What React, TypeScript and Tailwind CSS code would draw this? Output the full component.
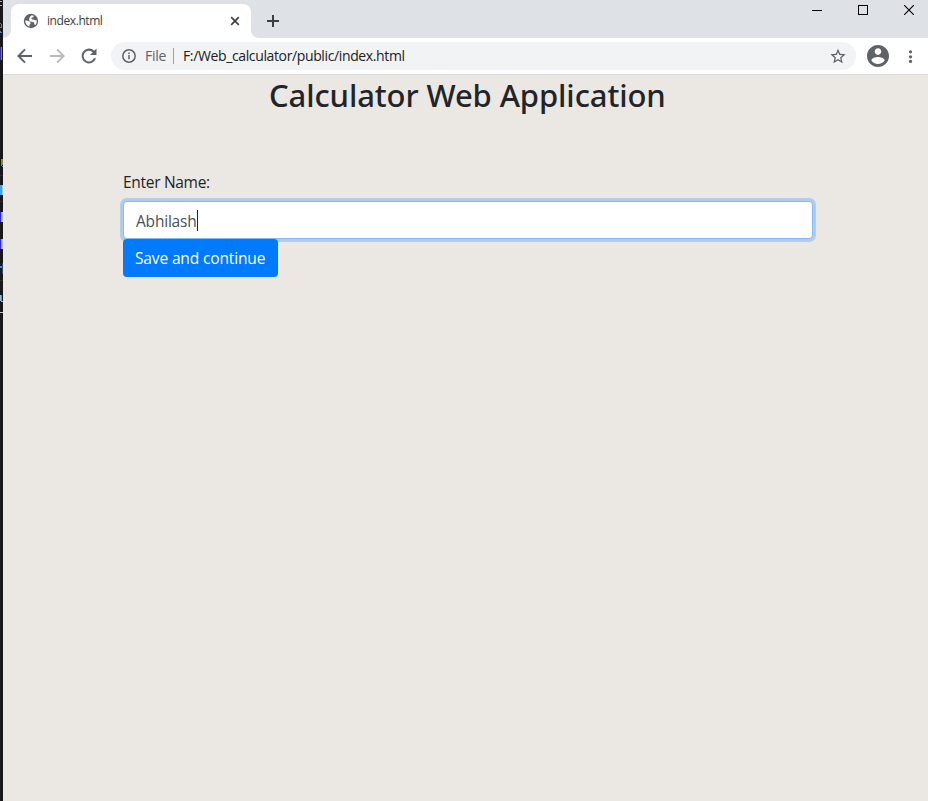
import React from "react";

function EditorSliver() {
  return (
    <svg width="3" height="801" viewBox="0 0 3 801" shapeRendering="crispEdges" className="block shrink-0 bg-[#18181a]">
      <path d="M0 1h2v1H0zM0 5h2v1H0z" fill="#a9a9a9" />
      <path d="M0 23h1v1H0zM1 24h1v3H1zM0 27h2v1H0zM0 31h1v2H0zM1 32h1v1H1z" fill="#3f86c8" />
      <path d="M0 47h1v13H0z" fill="#30308f" />
      <path d="M1 47h1v13H1z" fill="#5e83d8" />
      <path d="M1 159h1v7H1zM2 159h1v1H2zM2 166h1v1H2z" fill="#3991d8" />
      <path d="M2 160h1v5H2z" fill="#8a8340" />
      <path d="M0 185h2v10H0z" fill="#48a0e8" />
      <path d="M2 185h1v10H2z" fill="#8ecbe4" />
      <path d="M0 212h1v10H0zM0 239h1v10H0z" fill="#3326cb" />
      <path d="M1 212h1v10H1zM1 239h1v10H1z" fill="#6ba7c8" />
      <path d="M2 212h1v10H2zM2 239h1v10H2z" fill="#a9c7da" />
      <path d="M0 266h2v2H0z" fill="#5389b7" />
      <path d="M2 263h1v11H2z" fill="#254a78" />
      <path d="M0 295h1v6H0zM1 301h2v1H1z" fill="#86b8dd" />
      <path d="M1 295h1v6H1z" fill="#b88532" />
      <path d="M0 312h3v1H0z" fill="#c5c5c5" />
      <path d="M0 175h3v1H0zM0 201h3v1H0zM0 280h3v1H0z" fill="#2b2b2c" />
    </svg>
  );
}

function TabStrip() {
  return (
    <div className="flex h-[38px] items-start bg-[#dee1e6]">
      <svg width="8" height="8" viewBox="0 0 8 8" className="mt-[30px] shrink-0">
        <path d="M0 8H8V0A8 8 0 0 1 0 8Z" fill="#fff" />
      </svg>
      <div className="mt-1 flex h-[34px] w-60 shrink-0 items-center rounded-t-lg bg-white pl-3 pr-[11px]">
        <svg width="16" height="16" viewBox="0 0 16 16" className="shrink-0">
          <circle cx="8" cy="8" r="7.2" fill="#5f6368" />
          <path
            d="M8.8 2.2 10.800 2.700C10.700 4 9.800 4.500 8.600 4.700c-.5.900 0 1.600 1.200 1.700 1.600 0 2.400.8 3.900.8.300 2-.3 3.700-1.400 4.900-1-.2-.9-1.200-1.200-2-.400-1.200-1.600-1.300-2.800-1.300-1.600 0-2.200-1-2.200-2.200C6.100 4.600 7.300 3.200 8.800 2.200ZM2.200 7.600c1.800 0 3.300.2 4.300 1 .9.700 1.300 1.500 1 2.500-.900.100-1.100.600-1.100 1.400v1.200C4 12.800 2.300 10.700 2.200 7.600Z"
            fill="#fff"
          />
        </svg>
        <span className="ml-2 grow whitespace-nowrap text-[12px] leading-4 tracking-[-0.42px] text-[#3c4043]">index.html</span>
        <svg width="10" height="10" viewBox="0 0 10 10" stroke="#3c4043" strokeWidth="1.7" className="shrink-0">
          <path d="M1.2 1.2l7.6 7.6M8.8 1.2L1.2 8.8" />
        </svg>
      </div>
      <svg width="8" height="8" viewBox="0 0 8 8" className="mt-[30px] shrink-0">
        <path d="M0 8H8A8 8 0 0 1 0 0Z" fill="#fff" />
      </svg>
      <svg width="12" height="12" viewBox="0 0 12 12" fill="#3c4043" className="ml-2 mt-[15px] shrink-0">
        <path d="M5 0h2v5h5v2H7v5H5V7H0V5h5z" />
      </svg>
      <div className="ml-auto flex shrink-0 gap-9 pr-[14px] pt-[5px] text-black">
        <svg width="10" height="10" viewBox="0 0 10 10" shapeRendering="crispEdges">
          <path d="M0 5h10v1H0z" />
        </svg>
        <svg width="10" height="10" viewBox="0 0 10 10" shapeRendering="crispEdges" fill="none" stroke="currentColor">
          <path d="M.5 .5h9v9h-9z" />
        </svg>
        <svg width="10" height="10" viewBox="0 0 10 10" stroke="currentColor" strokeWidth="1.1">
          <path d="M0 0l10 10M10 0L0 10" />
        </svg>
      </div>
    </div>
  );
}

function Toolbar() {
  return (
    <div className="flex h-[37px] items-center border-b border-[#dadce0] bg-white pl-[13px] pr-2">
      <svg width="18" height="18" viewBox="3 3 18 18" fill="#5f6368" className="shrink-0">
        <path d="M19 11H7.830l4.900-4.900L11.300 4.700 4 12l7.300 7.300 1.410-1.410L7.830 13H19z" />
      </svg>
      <svg width="18" height="18" viewBox="3 3 18 18" fill="#bababa" className="ml-[14px] shrink-0">
        <path d="M12.700 4.700l-1.410 1.410L16.170 11H5v2h11.170l-4.880 4.890L12.700 19.300 20 12z" />
      </svg>
      <svg width="18" height="18" viewBox="3 3 18 18" fill="#5f6368" className="ml-[14px] shrink-0">
        <path d="M17.300 6.700A7.400 7.400 0 1 0 19.100 14.300h-2.200A5.400 5.400 0 1 1 15.800 8.200L13 11h6.500V4.500z" />
      </svg>
      <div className="ml-[13px] flex h-7 w-[745px] shrink-0 items-center rounded-full bg-[#f1f3f4] pl-[10px] pr-[10px] text-[14px] leading-5">
        <svg width="16" height="16" viewBox="0 0 16 16" fill="none" stroke="#5f6368" strokeWidth="1.5" className="shrink-0">
          <circle cx="8" cy="8" r="6.2" />
          <path d="M8 7v4.3M8 4.5v1.6" />
        </svg>
        <span className="ml-2 w-[22px] whitespace-nowrap tracking-[-0.3px] text-[#5f6368]">File</span>
        <span className="ml-[6px] h-4 w-px bg-[#a0a3a7]" />
        <span className="ml-[9px] grow whitespace-nowrap tracking-[-0.37px] text-[#202124]">F:/Web_calculator/public/index.html</span>
        <svg width="16" height="16" viewBox="1.5 1 21 21" fill="#5f6368" className="shrink-0">
          <path d="M22 9.24l-7.19-.62L12 2 9.19 8.63 2 9.24l5.46 4.73L5.82 21 12 17.27 18.18 21l-1.63-7.03L22 9.24zM12 15.4l-3.76 2.27 1-4.28-3.32-2.88 4.38-.38L12 6.1l1.71 4.04 4.38.38-3.32 2.88 1 4.28L12 15.4z" />
        </svg>
      </div>
      <svg width="22" height="22" viewBox="2 2 20 20" fill="#5f6368" className="ml-[11px] shrink-0">
        <path d="M12 2C6.48 2 2 6.48 2 12s4.48 10 10 10 10-4.48 10-10S17.52 2 12 2zm0 3c1.66 0 3 1.34 3 3s-1.34 3-3 3-3-1.34-3-3 1.34-3 3-3zm0 14.2c-2.5 0-4.71-1.28-6-3.22.03-1.99 4-3.08 6-3.08 1.99 0 5.97 1.09 6 3.08-1.29 1.94-3.5 3.22-6 3.22z" />
      </svg>
      <svg width="5" height="13" viewBox="0 0 5 13" fill="#5f6368" className="ml-auto mr-[7px] shrink-0">
        <circle cx="2.5" cy="1.800" r="1.6" />
        <circle cx="2.5" cy="6.800" r="1.6" />
        <circle cx="2.500" cy="11.400" r="1.6" />
      </svg>
    </div>
  );
}

export default function App() {
  return (
    <div className="flex h-[801px] w-[928px] overflow-hidden font-['Open_Sans','Noto_Sans',sans-serif]">
      <EditorSliver />
      <div className="flex min-w-0 grow flex-col bg-[#ebe7e2]">
        <TabStrip />
        <Toolbar />
        <main className="flex flex-col text-[#212529]">
          <h2 className="mt-px whitespace-nowrap pl-[266px] font-['Noto_Sans',sans-serif] text-[31px] font-medium leading-[38px] tracking-[-0.1px]">
            Calculator Web Application
          </h2>
          <form className="ml-[120px] mt-[56px] flex w-[690px] flex-col items-start" onSubmit={(e) => e.preventDefault()}>
            <label className="mb-[7px] whitespace-nowrap text-[15.5px] leading-6 tracking-[-0.3px]">Enter Name:</label>
            <div className="flex h-[38px] w-full items-center rounded border border-[#80bdff] bg-white pl-3 shadow-[0_0_0_3px_rgba(0,123,255,0.25)]">
              <span className="whitespace-nowrap pt-0.5 text-[15.5px] leading-6 tracking-[-0.2px] text-[#495057]">Abhilash</span>
              <span className="mt-px h-[21px] w-px bg-[#212529]" />
            </div>
            <button className="relative h-[38px] w-[155px] whitespace-nowrap rounded bg-[#007bff] pl-3 text-left text-[15.5px] leading-6 tracking-[-0.14px] text-white">
              Save and continue
            </button>
          </form>
        </main>
      </div>
    </div>
  );
}
